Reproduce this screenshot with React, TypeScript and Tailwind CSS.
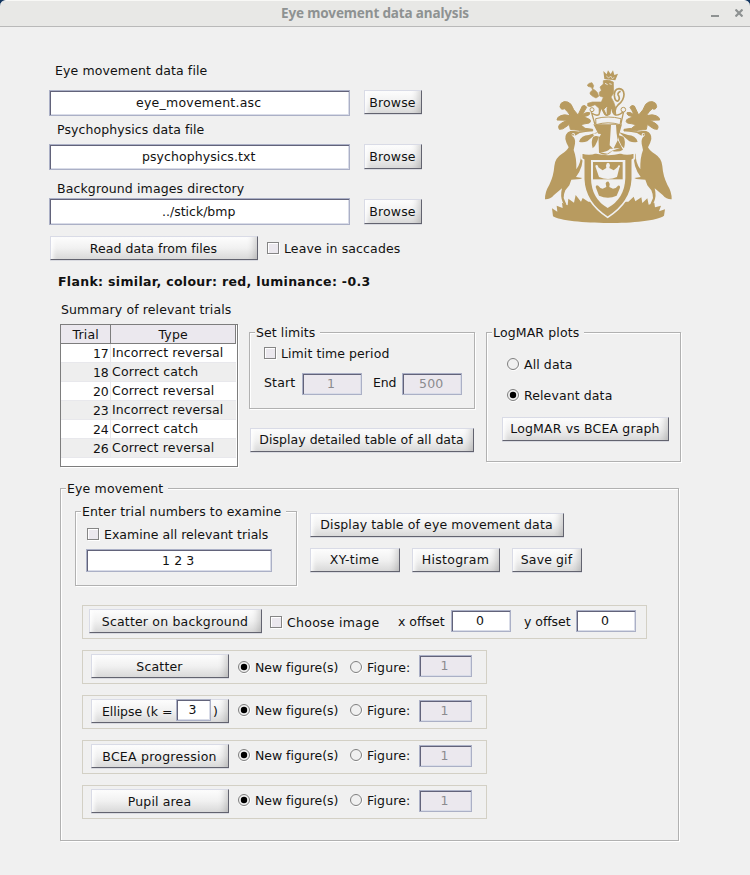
import type { ReactNode } from 'react'

const FAMILY = '"DejaVu Sans", Verdana, sans-serif'
const ctx = document.createElement('canvas').getContext('2d')

// Letter spacing that makes a string as wide as the toolkit's hinted text.
function spacing(text: string, width: number, font: string) {
  if (!ctx) return 0
  ctx.font = font
  return (width - ctx.measureText(text).width) / text.length
}

function T({ w, children, className = '' }: { w: number; children: string; className?: string }) {
  const single = children.length === 1
  return (
    <span
      className={`block h-4 shrink-0 whitespace-pre text-[12.5px] leading-4 ${single ? '' : 'pl-px'} ${className}`}
      style={{ width: w, letterSpacing: spacing(children, single ? w : w - 1.6, `12.5px ${FAMILY}`) }}
    >
      {children}
    </span>
  )
}

function Button({ w, text, low = false, className = '' }: { w: number; text: string; low?: boolean; className?: string }) {
  return (
    <button
      className={`flex shrink-0 items-center justify-center border border-t-[#d9dbe6] border-r-[#62636f] border-b-[#62636f] border-l-[#d9dbe6] bg-linear-to-b from-[#fdfdfd] via-[#f1f1f1] to-[#d9d9d9] pr-0.5 shadow-[0_1px_0_#d9dae0,inset_-9px_0_7px_-6px_rgba(0,0,0,0.17),inset_5px_0_4px_-3px_#fff] ${
        low ? 'pt-0.5' : ''
      } ${className}`}
    >
      <T w={w}>{text}</T>
    </button>
  )
}

function Field({ w, text, off = false, className = '' }: { w: number; text: string; off?: boolean; className?: string }) {
  return (
    <div
      className={`flex shrink-0 items-center justify-center border border-[#abb0c6] pr-0.5 ${
        off
          ? 'bg-[#ebe8ee] text-[#8b8b8f] shadow-[inset_1px_1px_0_#62637a,inset_-1px_-1px_0_#d9dce8]'
          : 'bg-white shadow-[inset_1px_1px_0_#62637a,inset_-1px_-1px_0_#d9dce8]'
      } ${className}`}
    >
      <T w={w}>{text}</T>
    </div>
  )
}

function Check({ className = '' }: { className?: string }) {
  return <span className={`block size-3 shrink-0 border border-[#858585] bg-[#ebe8ee] shadow-[1px_1px_0_#fff,inset_1px_1px_0_#fff] ${className}`} />
}

function Radio({ on = false, className = '' }: { on?: boolean; className?: string }) {
  return (
    <svg viewBox="0 0 13 13" className={`size-[13px] shrink-0 ${className}`}>
      <circle cx="6.5" cy="6.5" r="6" fill="none" stroke="#fff" />
      <circle cx="6" cy="6" r="5.5" fill="#f0f0f0" stroke="#777" strokeWidth=".95" />
      {on && <circle cx="6" cy="6" r="3.2" fill="#000" />}
    </svg>
  )
}

function Group({ title, w, className = '', children }: { title: string; w: number; className?: string; children: ReactNode }) {
  return (
    <section className={`relative shrink-0 border border-[#b1b1b1] shadow-[1px_1px_0_#fff,inset_1px_1px_0_#fff] ${className}`}>
      <div className="absolute -top-2 left-[5px] bg-[#f0f0f0] pr-1">
        <T w={w}>{title}</T>
      </div>
      {children}
    </section>
  )
}

function Supporter() {
  return (
    <g>
      <path d="M188 212L150 214Q136 208 121 213Q104 220 106 237Q109 251 116 262Q111 273 94 283Q75 295 73 318Q71 348 58 374Q44 397 45 418Q60 419 72 405L96 385Q90 408 98 426L104 437L109 433L101 414Q101 402 106 391L118 376L124 359L151 357L157 354L138 351Q162 318 157 288L153 280Q154 308 139 328Q140 293 131 270L135 251Q137 234 127 229L138 226L149 219Z" />
      <path
        d="M180 179Q166 173 163 169Q181 167 179 158Q171 154 158 164Q164 151 170 142Q166 133 157 138L144 165Q129 150 123 133Q114 123 102 125Q90 128 90 140Q93 151 103 146Q111 151 121 167Q101 162 92 167Q80 172 81 180L112 181Q93 188 87 196Q84 202 88 208Q98 209 107 201L118 193L121 208Q150 214 188 213L188 208L165 205L152 194Q165 191 178 189Q184 185 180 179Z"
        stroke="#b89b60"
        strokeWidth="3"
      />
      <path d="M147 245Q154 225 176 225L204 216Q185 233 172 244Q158 249 147 245ZM190 230L208 224Q203 244 195 258L188 265Q182 242 190 230Z" />
      <path d="M108 215Q120 208 148 214" fill="none" stroke="#f0f0f0" strokeWidth="2" />
      <circle cx="130" cy="224" r="5" fill="#f0f0f0" />
      <circle cx="129" cy="224" r="2.8" />
    </g>
  )
}

function Crest() {
  return (
    <svg viewBox="0 0 480 510" className="h-[170px] w-40" fill="#b89b60">
      <path d="M66 445L82 455L80 437L98 444L96 428L113 436L115 416L132 428L137 405L153 425L158 414L175 425H295L311 410L316 424L334 412L337 429L352 415L356 434L373 428L375 442L393 437L387 454L405 448L402 467C382 482 307 489 235 489S88 482 69 469Z" />
      <Supporter />
      <g transform="translate(470 0) scale(-1 1)">
        <Supporter />
      </g>
      <path d="M155 278Q178 286 196 278Q235 288 272 278Q290 285 313 278L313 296L307 300V358Q304 427 233 472Q164 428 161 358V300L155 296Z" stroke="#f0f0f0" strokeWidth="5" />
      <path d="M183 300H286V354Q284 416 233 444Q184 416 183 354Z" fill="#f0f0f0" />
      <path d="M189 306H278V358H189Z" />
      <path d="M207 351L197 322Q194 316 199 315Q205 315 205 322Q213 328 218 331L229 324L228 317Q229 308 234 308Q239 309 240 316L238 324L251 331Q257 327 263 321Q264 314 269 316Q272 319 268 323L261 351Q234 363 207 351Z" fill="#f0f0f0" />
      <path d="M207 407L197 381Q198 373 205 377Q210 385 218 386L229 381L227 370Q230 362 236 365Q241 370 238 381L249 386Q258 386 264 377Q271 375 270 383L260 407Q234 419 207 407Z" />
      {/* rampant lion */}
      <path d="M223 57L220 33L230 43L234 31L242 42L249 31L253 45L264 41L256 61Z" />
      <path d="M229 48l7 6 6-6 5 8 6-4" fill="none" stroke="#f0f0f0" strokeWidth="2" />
      <path
        d="M220 62Q233 56 250 66L251 100L243 111Q253 127 257 144L250 176H208L207 145L195 134L181 140L173 138L173 130L187 126L214 126L220 112L209 108L208 97L214 91L210 81L220 72ZM172 75L178 70L186 68L191 77L188 86L197 92L203 99L206 109L198 114L188 109L180 102L181 96L188 90L184 82L174 79Z"
        stroke="#b89b60"
        strokeWidth="2"
      />
      <path d="M225 70l8 4m5-3l7 2M224 148l7-7v22z" stroke="#f0f0f0" strokeWidth="2.5" fill="#f0f0f0" />
      <path d="M260 176Q249 149 264 135Q282 122 282 103Q281 87 267 86Q252 88 253 107Q255 125 264 123Q272 115 264 104Q263 97 272 94" fill="none" stroke="#b89b60" strokeWidth="5" />
      {/* coronet and helmet */}
      <path d="M190 193L205 222L207 278Q230 292 246 273Q266 278 279 269L263 239L276 193Z" />
      <path d="M243 195H258Q259 221 263 241L250 267L239 256ZM190 220L213 222L209 230L190 226ZM211 277Q232 276 240 266L270 264L246 272L232 281Z" fill="#f0f0f0" />
      <path d="M194 190L185 159Q199 169 207 164L214 141Q224 168 231 166L245 141Q248 166 257 165Q268 167 281 154L273 190Q234 176 194 190Z" fill="#f0f0f0" stroke="#b89b60" strokeWidth="4" />
      <path d="M214 142Q225 168 230 164L230 142L244 142L242 162Q235 171 223 164Z" />
      <g fill="#f0f0f0" stroke="#b89b60" strokeWidth="3">
        <circle cx="186" cy="149" r="6" />
        <circle cx="280" cy="149" r="7" />
        <path d="M197 176Q234 166 273 176L270 194Q235 183 198 194Z" />
      </g>
    </svg>
  )
}

const trials = [
  { id: '17', type: 'Incorrect reversal', w: 113 },
  { id: '18', type: 'Correct catch', w: 88 },
  { id: '20', type: 'Correct reversal', w: 104 },
  { id: '23', type: 'Incorrect reversal', w: 113 },
  { id: '24', type: 'Correct catch', w: 88 },
  { id: '26', type: 'Correct reversal', w: 104 },
]

function TrialTable() {
  return (
    <div className="mt-1.5 ml-[60px] h-[143px] w-[178px] shrink-0 border border-[#7d7d7d] bg-white pr-px shadow-[1px_1px_0_#fff]">
      <div className="flex h-[19px] border-r border-b border-[#7d7d7d] bg-[#ebe8ee]">
        <div className="flex w-[50px] justify-center border-r border-[#7d7d7d] pt-0.5">
          <T w={28}>Trial</T>
        </div>
        <div className="flex flex-1 justify-center pt-0.5">
          <T w={31}>Type</T>
        </div>
      </div>
      {trials.map((t) => (
        <div key={t.id} className="flex h-[19px] border-b border-[#e8e8ec] odd:bg-[#eeeeee] even:bg-white">
          <div className="flex w-[50px] justify-end border-r border-[#e8e8ec] pt-0.5 pr-px">
            <T w={17}>{t.id}</T>
          </div>
          <div className="pt-px">
            <T w={t.w}>{t.type}</T>
          </div>
        </div>
      ))}
    </div>
  )
}

function PlotRow({ children, first = false }: { children: ReactNode; first?: boolean }) {
  return (
    <div className="ml-[21px] flex h-[34px] w-[405px] shrink-0 items-start border border-[#d3d0c5] pt-[3px] pl-2">
      {children}
      <div className={`flex ${first ? 'mt-[7px]' : 'mt-[5px]'}`}>
        <Radio on className="ml-[9px]" />
        <T w={85} className="-mt-px ml-[3px]">New figure(s)</T>
        <Radio className="ml-[11px]" />
        <T w={45} className="-mt-px ml-[3px]">Figure:</T>
      </div>
      <Field w={8} text="1" off className="mt-px ml-[8px] h-[22px] w-[53px]" />
    </div>
  )
}

export default function App() {
  return (
    <div className="h-[875px] w-[750px] overflow-hidden bg-[#f0f0f0] font-['DejaVu_Sans',Verdana,sans-serif] text-[#111]">
      <div className="bg-[#12355f]">
        <header className="flex h-[27px] rounded-t-[6px] border-t border-b border-t-[#f8f8f6] border-b-[#b9b9b9] bg-[#e8e8e6]">
          <h1
            className="ml-[281px] w-[189px] pt-0.5 font-['Noto_Sans',sans-serif] text-[13.5px] leading-5 font-bold whitespace-pre text-[#8e9292]"
            style={{ letterSpacing: spacing('Eye movement data analysis', 188, 'bold 13.5px "Noto Sans"') }}
          >
            Eye movement data analysis
          </h1>
          <span className="mt-3.5 ml-[241px] h-0.5 w-2 bg-[#8e9292]" />
          <svg viewBox="0 0 8 8" className="mt-2 ml-4 size-2" stroke="#8e9292" strokeWidth="2.2">
            <path d="M.5.5l7 7m0-7l-7 7" />
          </svg>
        </header>
      </div>

      <div className="flex h-[291px]">
        <div className="flex w-[530px] flex-col">
          <T w={154} className="mt-9 ml-[54px]">Eye movement data file</T>
          <div className="mt-[11px] ml-[49px] flex h-[26px] shrink-0">
            <Field w={127} text="eye_movement.asc" className="h-[26px] w-[301px]" />
            <Button w={48} text="Browse" low className="ml-3.5 h-6 w-[58px]" />
          </div>
          <T w={149} className="mt-1.5 ml-14">Psychophysics data file</T>
          <div className="mt-1.5 ml-[49px] flex h-[26px] shrink-0">
            <Field w={115} text="psychophysics.txt" className="h-[26px] w-[301px]" />
            <Button w={48} text="Browse" className="ml-3.5 h-[25px] w-[58px]" />
          </div>
          <T w={189} className="mt-[11px] ml-14">Background images directory</T>
          <div className="mt-px ml-[49px] flex h-[27px] shrink-0">
            <Field w={75} text="../stick/bmp" className="h-[27px] w-[301px]" />
            <Button w={48} text="Browse" className="mt-px ml-3.5 h-[25px] w-[58px]" />
          </div>
          <div className="mt-[11px] ml-[50px] flex h-[25px] shrink-0">
            <Button w={129} text="Read data from files" low className="h-6 w-52" />
            <Check className="mt-1.5 ml-[9px]" />
            <T w={118} className="mt-[5px] ml-1">Leave in saccades</T>
          </div>
          <p
            className="mt-[13px] ml-[58px] h-4 w-[314px] text-[12.5px] leading-4 font-bold whitespace-pre"
            style={{ letterSpacing: spacing('Flank: similar, colour: red, luminance: -0.3', 312.5, `bold 12.5px ${FAMILY}`) }}
          >
            Flank: similar, colour: red, luminance: -0.3
          </p>
          <T w={172} className="mt-3 ml-[60px]">Summary of relevant trials</T>
        </div>
        <div className="pt-[33px]">
          <Crest />
        </div>
      </div>

      <div className="flex h-[170px]">
        <TrialTable />
        <div className="ml-[11px] flex flex-col">
          <Group title="Set limits" w={61} className="mt-3.5 h-[77px] w-[226px]">
            <div className="mt-3.5 ml-3.5 flex">
              <Check />
              <T w={110} className="-mt-px ml-[4px]">Limit time period</T>
            </div>
            <div className="mt-[11px] ml-[13px] flex">
              <T w={33} className="mt-0.5">Start</T>
              <Field w={8} text="1" off className="ml-[6px] h-[22px] w-[60px]" />
              <T w={25} className="mt-0.5 ml-[10px]">End</T>
              <Field w={26} text="500" off className="ml-[5px] h-[22px] w-[60px]" />
            </div>
          </Group>
          <Button w={206} text="Display detailed table of all data" className="mt-[19px] ml-px h-6 w-56" />
        </div>
        <Group title="LogMAR plots" w={88} className="mt-3.5 ml-[11px] h-[130px] w-[195px]">
          <div className="mt-[25px] ml-5 flex">
            <Radio />
            <T w={50} className="-mt-px ml-[3px]">All data</T>
          </div>
          <div className="mt-[15px] ml-5 flex">
            <Radio on className="mt-px" />
            <T w={90} className="ml-[3px]">Relevant data</T>
          </div>
          <Button w={151} text="LogMAR vs BCEA graph" className="mt-[13px] ml-[15px] h-6 w-[167px]" />
        </Group>
      </div>

      <Group title="Eye movement" w={98} className="ml-[60px] flex h-[353px] w-[619px] flex-col">
        <div className="flex h-[116px] shrink-0">
          <Group title="Enter trial numbers to examine" w={201} className="mt-[22px] ml-3.5 h-[75px] w-[222px]">
            <div className="mt-4 ml-[11px] flex">
              <Check />
              <T w={166} className="-mt-px ml-[4px]">Examine all relevant trials</T>
            </div>
            <Field w={34} text="1 2 3" className="mt-[6px] ml-2.5 h-[23px] w-[186px]" />
          </Group>
          <div className="mt-6 ml-[13px] flex flex-col">
            <Button w={234} text="Display table of eye movement data" className="h-6 w-[254px]" />
            <div className="mt-[11px] flex gap-3">
              <Button w={51} text="XY-time" className="h-6 w-[90px]" />
              <Button w={69} text="Histogram" className="h-6 w-[88px]" />
              <Button w={53} text="Save gif" className="h-6 w-[70px]" />
            </div>
          </div>
        </div>
        <div className="ml-[21px] flex h-[34px] w-[565px] shrink-0 border border-[#d3d0c5] pt-[3px] pl-1.5">
          <Button w={148} text="Scatter on background" low className="h-6 w-[173px]" />
          <Check className="mt-[7px] ml-2" />
          <T w={94} className="mt-1.5 ml-[4px]">Choose image</T>
          <T w={48} className="mt-[5px] ml-[17px]">x offset</T>
          <Field w={8} text="0" className="mt-px ml-[6px] h-[22px] w-[60px]" />
          <T w={48} className="mt-[5px] ml-3">y offset</T>
          <Field w={8} text="0" className="mt-px ml-[5px] h-[22px] w-[60px]" />
        </div>
        <div className="mt-[11px] flex flex-col gap-[11px]">
          <PlotRow first>
            <Button w={48} text="Scatter" low className="h-6 w-[138px]" />
          </PlotRow>
          <PlotRow>
            <div className="flex h-6 w-[138px] shrink-0 border border-t-[#d9dbe6] border-r-[#62636f] border-b-[#62636f] border-l-[#d9dbe6] bg-linear-to-b from-[#fdfdfd] via-[#f1f1f1] to-[#d9d9d9] shadow-[0_1px_0_#d9dae0,inset_-9px_0_7px_-6px_rgba(0,0,0,0.17),inset_5px_0_4px_-3px_#fff]">
              <T w={72} className="mt-1 ml-[9px]">Ellipse (k =</T>
              <Field w={8} text="3" className="-mt-px ml-[3px] h-[22px] w-[35px]" />
              <T w={6} className="mt-1 ml-[2px]">)</T>
            </div>
          </PlotRow>
          <PlotRow>
            <Button w={116} text="BCEA progression" low className="h-6 w-[138px]" />
          </PlotRow>
          <PlotRow>
            <Button w={65} text="Pupil area" low className="h-6 w-[138px]" />
          </PlotRow>
        </div>
      </Group>
    </div>
  )
}
